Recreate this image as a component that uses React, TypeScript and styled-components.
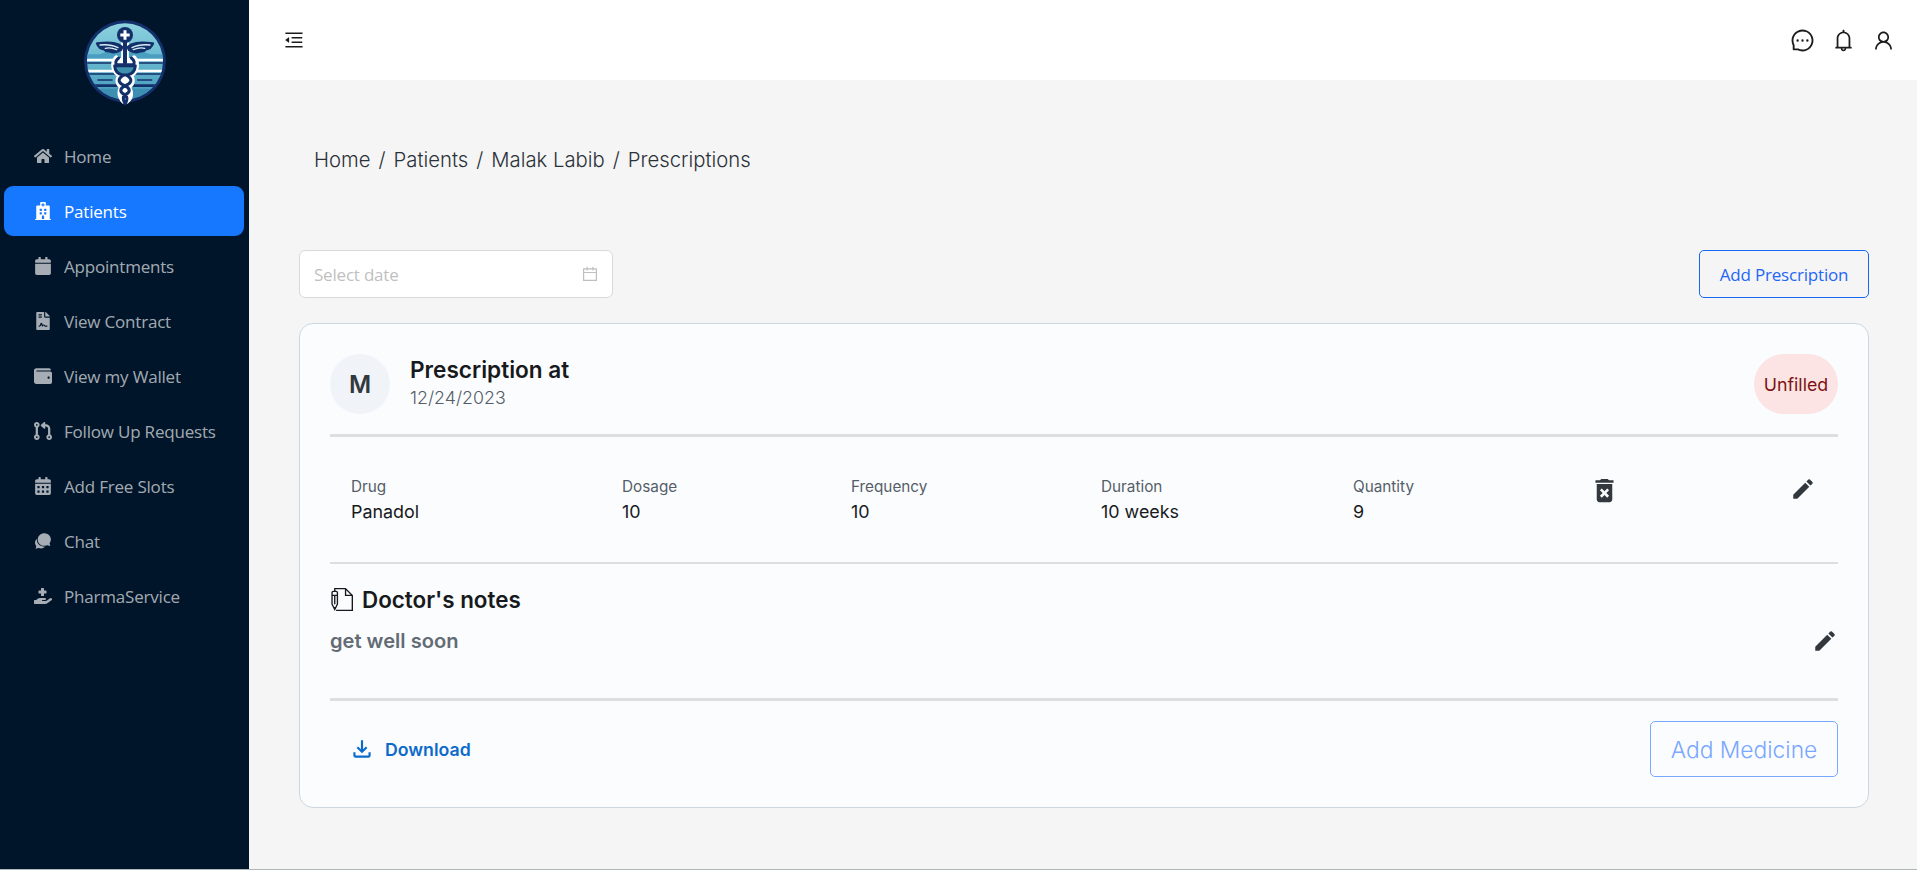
import React from 'react';
import styled, { createGlobalStyle } from 'styled-components';
import {
  FaHome,
  FaHospital,
  FaCalendar,
  FaFileContract,
  FaWallet,
  FaCalendarAlt,
  FaHandHoldingMedical,
} from 'react-icons/fa';
import { FaCodePullRequest } from 'react-icons/fa6';
import { IoChatbubblesSharp } from 'react-icons/io5';
import {
  AiOutlineMenuFold,
  AiOutlineMessage,
  AiOutlineBell,
  AiOutlineUser,
  AiOutlineCalendar,
} from 'react-icons/ai';
import { MdDeleteForever, MdEdit, MdOutlineFileDownload } from 'react-icons/md';
import { TfiWrite } from 'react-icons/tfi';

const GlobalStyle = createGlobalStyle`
  *, *::before, *::after { box-sizing: border-box; }
  body {
    margin: 0;
    background: #f5f5f5;
    font-family: Inter, 'Liberation Sans', sans-serif;
  }
  button { font: inherit; cursor: pointer; }
  svg { display: block; flex: none; }
`;

const uiFont = `'Open Sans', 'Noto Sans', sans-serif`;

const Shell = styled.div`
  display: flex;
  height: 870px;
  overflow: hidden;
  border-bottom: 1px solid #b0b7b7;
`;

const Sidebar = styled.aside`
  flex: none;
  width: 249px;
  background: #001529;
`;

const LogoBox = styled.div`
  display: flex;
  justify-content: center;
  height: 131px;
  padding-top: 10px;
`;

const Menu = styled.nav`
  display: flex;
  flex-direction: column;
  gap: 5px;
  padding: 0 5px 0 4px;
`;

const MenuItem = styled.a<{ $active?: boolean }>`
  display: flex;
  align-items: center;
  gap: 12px;
  height: 50px;
  padding-left: 30px;
  border-radius: 9px;
  background: ${(p) => (p.$active ? '#1677ff' : 'transparent')};
  color: ${(p) => (p.$active ? '#fff' : 'rgba(255, 255, 255, 0.65)')};
  font: 400 17px / 24px ${uiFont};
  letter-spacing: -0.2px;

  span {
    padding-top: 2px;
  }

  svg {
    width: 18px;
    height: 18px;
  }
`;

const Main = styled.div`
  flex: 1;
  min-width: 0;
`;

const TopBar = styled.header`
  display: flex;
  align-items: center;
  justify-content: space-between;
  height: 80px;
  padding: 0 22px 0 34px;
  background: #fff;
  color: #1c1c1c;
`;

const TopIcons = styled.div`
  display: flex;
  align-items: center;
  gap: 16px;
`;

const Content = styled.main`
  padding: 65px 48px 0 50px;
`;

const Breadcrumb = styled.div`
  display: flex;
  gap: 8px;
  padding-left: 15px;
  color: #2b3138;
  font-size: 20.3px;
  font-weight: 300;
  line-height: 30px;
`;

const Toolbar = styled.div`
  display: flex;
  justify-content: space-between;
  margin-top: 75px;
`;

const DateInput = styled.div`
  display: flex;
  align-items: center;
  justify-content: space-between;
  width: 314px;
  height: 48px;
  padding: 0 13px 0 14px;
  border: 1px solid #d9d9d9;
  border-radius: 6px;
  background: #fff;
  color: #bfbfbf;
  font: 400 17px / 24px ${uiFont};
  letter-spacing: -0.2px;

  span {
    padding-top: 2px;
  }
`;

const OutlineButton = styled.button<{ $large?: boolean }>`
  width: ${(p) => (p.$large ? '188px' : '170px')};
  height: ${(p) => (p.$large ? '56px' : '48px')};
  padding: ${(p) => (p.$large ? '1px 0 0' : '2px 0 0')};
  border: 1px solid ${(p) => (p.$large ? '#78a9ff' : '#1668f5')};
  border-radius: 5px;
  background: transparent;
  color: ${(p) => (p.$large ? '#7aa7ff' : '#1f66f5')};
  font: ${(p) => (p.$large ? '300 22.8px / 30px Inter, sans-serif' : `400 17px / 24px ${uiFont}`)};
  letter-spacing: ${(p) => (p.$large ? '0' : '-0.18px')};
`;

const Card = styled.section`
  margin-top: 25px;
  height: 485px;
  padding: 30px;
  border: 1px solid #cdd7e1;
  border-radius: 14px;
  background: #fbfcfe;
`;

const CardHeader = styled.div`
  display: flex;
  height: 60px;
`;

const Avatar = styled.div`
  display: flex;
  align-items: center;
  justify-content: center;
  width: 60px;
  height: 60px;
  border-radius: 50%;
  background: #f0f4f8;
  color: #32383e;
  font-size: 24px;
  font-weight: 600;
`;

const HeaderText = styled.div`
  margin-left: 20px;
  padding-top: 1px;
`;

const Title = styled.div`
  color: #171a1c;
  font-size: 22.6px;
  font-weight: 600;
  line-height: 29px;
`;

const Subtitle = styled.div`
  color: #555e68;
  font-size: 17.8px;
  font-weight: 300;
  line-height: 28px;
`;

const Chip = styled.span`
  display: flex;
  align-items: center;
  justify-content: center;
  width: 84px;
  height: 60px;
  margin-left: auto;
  border-radius: 30px;
  background: #fce4e4;
  color: #7d1212;
  font-size: 17.8px;
`;

const Divider = styled.hr<{ $size: number }>`
  height: ${(p) => p.$size}px;
  margin: 0;
  border: 0;
  background: #dddee0;
`;

const DrugRow = styled.div`
  display: grid;
  grid-template-columns: 271px 229px 250px 252px 236px 201px 1fr;
  height: 125px;
  padding: 38px 0 0 21px;
  color: #32383e;
`;

const FieldLabel = styled.div`
  color: #555e68;
  font-size: 15.3px;
  line-height: 24px;
`;

const FieldValue = styled.div`
  color: #171a1c;
  font-size: 17.9px;
  line-height: 25px;
`;

const IconCell = styled.div<{ $top: number }>`
  padding-top: ${(p) => p.$top}px;
`;

const Notes = styled.div`
  height: 134px;
  padding-top: 20px;
`;

const NotesTitle = styled(Title)`
  display: flex;
  align-items: center;
  gap: 9px;
  font-size: 22.4px;
  line-height: 31px;
`;

const NotesBody = styled.div`
  display: flex;
  align-items: center;
  justify-content: space-between;
  margin-top: 11px;
  color: #636b74;
  font-size: 20.1px;
  font-weight: 600;
  line-height: 30px;

  svg {
    color: #32383e;
  }
`;

const CardFooter = styled.div`
  display: flex;
  align-items: center;
  justify-content: space-between;
  height: 56px;
  margin-top: 20px;
`;

const CardTop = styled.div`
  height: 20px;
`;

const DownloadLink = styled.a`
  display: flex;
  align-items: center;
  gap: 10px;
  padding-left: 19px;
  color: #0b6bcb;
  font-size: 17.7px;
  font-weight: 600;
`;

const Logo = () => (
  <svg width="110" height="105" viewBox="0 0 330 315">
    <defs>
      <clipPath id="disc">
        <circle cx="165" cy="154" r="114" />
      </clipPath>
      <linearGradient id="sky" x1="0" y1="0" x2="0" y2="1">
        <stop offset="0" stopColor="#8fd3df" />
        <stop offset="0.45" stopColor="#69b9d0" />
        <stop offset="1" stopColor="#3f96b8" />
      </linearGradient>
    </defs>
    <circle cx="165" cy="154" r="123" fill="#14306b" />
    <g clipPath="url(#disc)">
      <rect x="45" y="35" width="240" height="245" fill="url(#sky)" />
      <path d="M50 133h40l18-8h112l20 8h45v16H50z" fill="#4a9fc0" />
      <path d="M50 150h235M50 183h235" stroke="#fff" strokeWidth="8" />
      <path d="M50 159h235M50 192h235" stroke="#14306b" strokeWidth="5" />
      <path d="M50 227h235" stroke="#14306b" strokeWidth="8" />
      <path d="M84 210h42M203 210h42" stroke="#14306b" strokeWidth="5" strokeLinecap="round" />
      <path d="M50 236h235v40H50z" fill="#3c8fb2" />
    </g>
    <g fill="none" strokeLinejoin="round" strokeLinecap="round">
      <path
        d="M139 144c-13 14-11 42 12 52-12 13-8 27 5 36-8 9-10 25 5 42h9c16-13 14-31 4-42 15-11 17-25 6-36 22-10 25-38 12-52"
        fill="#fff"
        stroke="#fff"
        strokeWidth="15"
      />
      <path d="M165 92v62" stroke="#fff" strokeWidth="23" />
      <path
        d="M157 111c-12-12-31-16-76-11 4 11 11 17 21 18 4 5 10 7 18 6 8 4 21 3 33-4zM173 111c12-12 31-16 76-11-4 11-11 17-21 18-4 5-10 7-18 6-8 4-21 3-33-4z"
        fill="#14306b"
        stroke="#14306b"
        strokeWidth="7"
      />
      <path
        d="M90 105c20-2 38 0 54 8M106 115c12-3 24 0 34 4M240 105c-20-2-38 0-54 8M224 115c-12-3-24 0-34 4"
        stroke="#d8eff4"
        strokeWidth="4"
      />
      <path d="M165 92v66" stroke="#14306b" strokeWidth="12" />
      <path d="M146 144c-10 8-11 16-5 20h48c6-4 5-12-5-20" stroke="#14306b" strokeWidth="9" />
      <path d="M134 167h62c-1 17-12 26-24 28h-14c-12-2-23-11-24-28z" fill="#3f91ac" stroke="#14306b" strokeWidth="9" />
      <path
        d="M158 197c-20 13-8 24 6 30 17 8 19 18 2 27-8 6-8 15-1 27M172 197c20 13 8 24-6 30-17 8-19 18-2 27 8 6 10 14 2 27"
        stroke="#14306b"
        strokeWidth="9"
      />
    </g>
    <circle cx="165" cy="75" r="24" fill="#14306b" />
    <path d="M165 61v28M151 75h28" stroke="#fff" strokeWidth="9" />
  </svg>
);

const menu = [
  { label: 'Home', Icon: FaHome },
  { label: 'Patients', Icon: FaHospital, active: true },
  { label: 'Appointments', Icon: FaCalendar },
  { label: 'View Contract', Icon: FaFileContract },
  { label: 'View my Wallet', Icon: FaWallet },
  { label: 'Follow Up Requests', Icon: FaCodePullRequest },
  { label: 'Add Free Slots', Icon: FaCalendarAlt },
  { label: 'Chat', Icon: IoChatbubblesSharp },
  { label: 'PharmaService', Icon: FaHandHoldingMedical },
];

const crumbs = ['Home', 'Patients', 'Malak Labib', 'Prescriptions'];

const fields = [
  ['Drug', 'Panadol'],
  ['Dosage', '10'],
  ['Frequency', '10'],
  ['Duration', '10 weeks'],
  ['Quantity', '9'],
];

export default function App() {
  return (
    <>
      <GlobalStyle />
      <Shell>
        <Sidebar>
          <LogoBox>
            <Logo />
          </LogoBox>
          <Menu>
            {menu.map(({ label, Icon, active }) => (
              <MenuItem key={label} $active={active}>
                <Icon />
                <span>{label}</span>
              </MenuItem>
            ))}
          </Menu>
        </Sidebar>
        <Main>
          <TopBar>
            <AiOutlineMenuFold size={22} />
            <TopIcons>
              <AiOutlineMessage size={25} />
              <AiOutlineBell size={25} />
              <AiOutlineUser size={23} />
            </TopIcons>
          </TopBar>
          <Content>
            <Breadcrumb>
              {crumbs.map((crumb, i) => (
                <React.Fragment key={crumb}>
                  {i > 0 && <span>/</span>}
                  <span>{crumb}</span>
                </React.Fragment>
              ))}
            </Breadcrumb>
            <Toolbar>
              <DateInput>
                <span>Select date</span>
                <AiOutlineCalendar size={18} />
              </DateInput>
              <OutlineButton>Add Prescription</OutlineButton>
            </Toolbar>
            <Card>
              <CardHeader>
                <Avatar>M</Avatar>
                <HeaderText>
                  <Title>Prescription at</Title>
                  <Subtitle>12/24/2023</Subtitle>
                </HeaderText>
                <Chip>Unfilled</Chip>
              </CardHeader>
              <CardTop />
              <Divider $size={3} />
              <DrugRow>
                {fields.map(([label, value]) => (
                  <div key={label}>
                    <FieldLabel>{label}</FieldLabel>
                    <FieldValue>{value}</FieldValue>
                  </div>
                ))}
                <IconCell $top={0}>
                  <MdDeleteForever size={31} />
                </IconCell>
                <IconCell $top={1}>
                  <MdEdit size={26} />
                </IconCell>
              </DrugRow>
              <Divider $size={2} />
              <Notes>
                <NotesTitle>
                  <TfiWrite size={23} />
                  Doctor's notes
                </NotesTitle>
                <NotesBody>
                  get well soon
                  <MdEdit size={26} />
                </NotesBody>
              </Notes>
              <Divider $size={3} />
              <CardFooter>
                <DownloadLink>
                  <MdOutlineFileDownload size={26} />
                  Download
                </DownloadLink>
                <OutlineButton $large>Add Medicine</OutlineButton>
              </CardFooter>
            </Card>
          </Content>
        </Main>
      </Shell>
    </>
  );
}
